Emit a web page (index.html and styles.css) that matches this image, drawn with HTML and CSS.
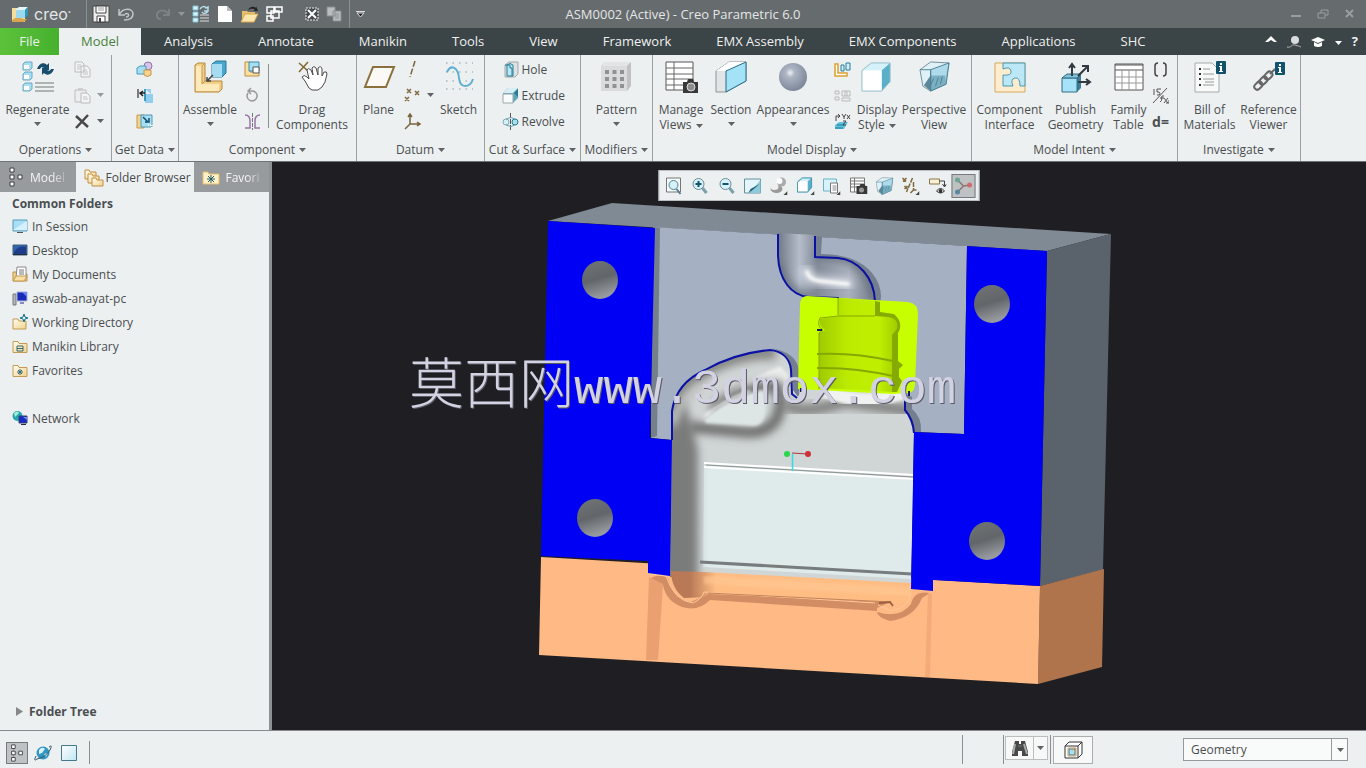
FILE: index.html
```html
<!DOCTYPE html>
<html lang="en">
<head>
<meta charset="utf-8">
<title>ASM0002 (Active) - Creo Parametric 6.0</title>
<link rel="stylesheet" href="styles.css">
</head>
<body>
<svg class="defs" aria-hidden="true">
  <defs>
    <linearGradient id="cubeFront" x1="0" y1="0" x2="1" y2="1"><stop offset="0" stop-color="#fff"/><stop offset="1" stop-color="#bfe6f3"/></linearGradient>
    <linearGradient id="folderFill" x1="0" y1="0" x2="1" y2="1"><stop offset="0" stop-color="#fffdf0"/><stop offset="1" stop-color="#f1d289"/></linearGradient>
    <radialGradient id="ball" cx=".4" cy=".35" r=".65"><stop offset="0" stop-color="#eef1f6"/><stop offset=".25" stop-color="#adb5c4"/><stop offset="1" stop-color="#7d889a"/></radialGradient>
    <symbol id="down" viewBox="0 0 7 4"><path d="M0 0h7L3.500 4z" fill="currentColor"/></symbol>
    <symbol id="folder" viewBox="0 0 16 16"><path d="M1 3.500h5l1 2h8v9H1z" fill="url(#folderFill)" stroke="#c49b55"/></symbol>
    <symbol id="cube" viewBox="0 0 32 32"><path d="M1 9L11 1h20L22 9z" fill="#d5f1f9"/><path d="M22 9L31 1v20l-9 10z" fill="#5bb0c9"/><path d="M1 9h21v22H1z" fill="#fff"/><path d="M1 9L11 1h20v20l-9 10H1z" fill="none" stroke="#8dbccb"/></symbol>
    <symbol id="views" viewBox="0 0 34 34"><path d="M2 2h27v28H2z" fill="#fff" stroke="#565656"/><path d="M2 8h27M2 14h27M2 19h27M2 25h27M10 2v28" fill="none" stroke="#666"/><path d="M19 22h4l1-3h5l1 3h4v11H19z" fill="#383838"/><circle cx="27" cy="27" r="4" fill="#8d8d8d" stroke="#ddd"/></symbol>
    <symbol id="persp" viewBox="0 0 32 32"><path d="M1 9L12 1l19 1-4 22-15 7-8-5z" fill="#dff1f7" stroke="#71909c"/><path d="M12 31L5 25 12 15h15l1 9z" fill="#5d8799"/><path d="M12 9L31 2 28 24 12 31z" fill="#8fcbe0" fill-opacity=".6" stroke="#4b8298"/><path d="M1 9h11v22M15 18l-4 9M20 17l-3 9M24 16l-2 8" fill="none" stroke="#4b8298"/></symbol>
    <symbol id="tree" viewBox="0 0 16 20"><path d="M4 5v10M5 10h6" stroke="#999"/><path d="M2 1h4v4H2zM2 8h4v4H2zM2 15h4v4H2zM10 8h4v4h-4z" fill="#fff" stroke="#3c4043"/></symbol>
    <symbol id="info" viewBox="0 0 10 13"><rect width="10" height="13" rx="1" fill="#12526c"/><path d="M4 2h2v2H4zM3 5h3v5h1v1H3v-1h1V6H3z" fill="#fff"/></symbol>
  </defs>
</svg>

<header class="titlebar">
  <div class="brand">
    <svg width="19" height="18" viewBox="0 0 19 18"><path d="M1 3h5v9h8v5H1z" fill="#f7dc9b"/><path d="M1 17h12l3-3h-3l-7-2-5 3z" fill="#d9a64e"/><path d="M5 4l3-2h9l-3 3v8H5z" fill="#e5f6fb"/><path d="M14 5l3-3v8l-3 3z" fill="#2f98bd"/><path d="M5 5h9v8H5z" fill="#9bd9ee"/></svg>
    <span>creo<sup>•</sup></span>
  </div>
  <div class="quick">
    <button aria-label="Save"><svg width="18" height="18" viewBox="0 0 18 18"><path d="M1 1h16v16H1z" fill="#eee" stroke="#444"/><path d="M4 1h10v7H4zM5 11h8v6H5z" fill="#fff" stroke="#444"/><path d="M6 3h6M6 5h6" stroke="#999"/><path d="M7 13h2v4H7z" fill="#444"/></svg></button>
    <button aria-label="Undo"><svg width="18" height="16" viewBox="0 0 18 16"><path d="M2 3v6h6M2 9C6 1 16 2 16 8c0 4-4 6-9 6M8 8c4-2 5 3 1 3" fill="none" stroke="#c2c6c8" stroke-width="1.500"/></svg></button>
    <button class="redo" aria-label="Redo"><svg width="18" height="16" viewBox="0 0 18 16"><path d="M15 3v6H9M15 9C11 2 2 4 3 10c0 2 2 3 4 3" fill="none" stroke="#7d8285" stroke-width="2"/></svg><svg class="arrow"><use href="#down"/></svg></button>
    <button aria-label="Regenerate model"><svg width="18" height="18" viewBox="0 0 18 18"><path d="M1 1h5v4H1zM1 7h5v4H1zM1 13h5v4H1z" fill="#d9f2fa" stroke="#82c4da"/><path d="M8 10h9M8 13h9M8 16h9" stroke="#ddd"/><path d="M8 4c2-3 5-3 6-1l2-1v4h-4M16 6c-2 3-5 3-6 1" fill="none" stroke="#b8dfed" stroke-width="1.500"/></svg></button>
    <button aria-label="New"><svg width="16" height="18" viewBox="0 0 16 18"><path d="M1 1h9l5 5v11H1z" fill="#fff"/><path d="M10 1v5h5z" fill="#b6bbbd"/></svg></button>
    <button aria-label="Open"><svg width="19" height="18" viewBox="0 0 19 18"><path d="M2 6h5l1 1h7v9H2z" fill="#e7bf6a"/><path d="M1 17l4-8h13l-4 8z" fill="#fbe6ad" stroke="#d5a952"/><path d="M8 5c2-4 6-4 8-2V1l2 5h-5l2-1c-2-2-4-1-7 0z" fill="#242424"/></svg></button>
    <button aria-label="Windows"><svg width="17" height="18" viewBox="0 0 17 18"><path d="M1 2h7v6H1zM9 2h7v5H9zM1 11h6v5H1zM5 6h8v7H5z" fill="#666b6e" stroke="#fff" stroke-width="1.500"/></svg></button>
    <button class="far" aria-label="Close window"><svg width="14" height="14" viewBox="0 0 14 14"><path d="M1 1h12v12H1z" fill="#454a4d" stroke="#eee" stroke-dasharray="2 1"/><path d="M3 3l8 8M11 3l-8 8" stroke="#fff" stroke-width="2"/></svg></button>
    <button aria-label="Copy"><svg width="16" height="16" viewBox="0 0 16 16"><path d="M1 1h8v9H1zM7 5h8v10H7z" fill="#b9bdbf" stroke="#888d90"/><path d="M9 8h4M9 10h4M9 12h4" stroke="#8b9093"/></svg></button>
    <button class="more" aria-label="Customize toolbar"><svg width="9" height="7" viewBox="0 0 9 7"><path d="M0 .500h9" stroke="#ddd"/><path d="M1 2h7L4.500 6z" fill="#222" stroke="#ddd"/></svg></button>
  </div>
  <h1>ASM0002 (Active) - Creo Parametric 6.0</h1>
  <div class="window-buttons">
    <button aria-label="Minimize"><svg width="12" height="12" viewBox="0 0 12 12"><path d="M1 8h10" stroke="#9a9ea0" stroke-width="2"/></svg></button>
    <button aria-label="Restore"><svg width="12" height="12" viewBox="0 0 12 12"><path d="M4 5V2h7v5H8M1 5h7v5H1z" fill="none" stroke="#9a9ea0"/></svg></button>
    <button aria-label="Close"><svg width="12" height="12" viewBox="0 0 12 12"><path d="M2 2l7 7M9 2l-7 7" stroke="#9a9ea0" stroke-width="2"/></svg></button>
  </div>
</header>

<nav class="tabs">
  <button class="file">File</button>
  <button class="current">Model</button>
  <button>Analysis</button><button>Annotate</button><button>Manikin</button><button>Tools</button><button>View</button><button>Framework</button><button>EMX Assembly</button><button>EMX Components</button><button>Applications</button><button>SHC</button>
  <div class="help">
    <button aria-label="Minimize ribbon"><svg width="12" height="14" viewBox="0 0 12 14"><path d="M0 7l6-6 6 6H9L6 5 3 7z" fill="#fff"/></svg></button>
    <button aria-label="Search"><svg width="14" height="14" viewBox="0 0 14 14"><circle cx="8" cy="5" r="4" fill="#d9dcdd"/><path d="M0 12c5 1 4-3 8-2 3 1 4 1 6 2" fill="none" stroke="#b3b8ba"/></svg></button>
    <button aria-label="Learning"><svg width="14" height="14" viewBox="0 0 14 14"><path d="M0 5l7-3 7 3-7 3z" fill="#fff"/><path d="M3 7v4q4 2 8 0V7L7 9z" fill="#fff"/></svg></button>
    <button aria-label="Help menu"><svg class="arrow"><use href="#down"/></svg></button>
    <button class="question">?</button>
  </div>
</nav>

<section class="ribbon" aria-label="Ribbon">
  <div class="group g-operations">
    <div class="row">
      <button class="tool"><svg width="34" height="34" viewBox="0 0 34 34"><g fill="#a7dff2" stroke="#6aa9c0"><path d="M2 4l2-2h7v6l-2 2H2zM2 14l2-2h7v6l-2 2H2zM2 25l2-2h7v6l-2 2H2z"/></g><path d="M3 5h5v4H3zM3 15h5v4H3zM3 26h5v4H3z" fill="#fff"/><path d="M14 23h19M14 27h19M14 31h19" stroke="#9c9fa0" stroke-width="1.500"/><path d="M16 9c2-6 7-7 10-4l2-2v7h-7l2-2c-2-1-3-1-4 1zM33 9c-2 6-7 7-10 4l-2 2V8h7l-2 2c2 1 3 1 4-1z" fill="#174e6e"/></svg><span>Regenerate</span><svg class="arrow"><use href="#down"/></svg></button>
      <div class="smalls with-menu">
        <button class="faded" aria-label="Copy"><svg width="17" height="17" viewBox="0 0 17 17"><path d="M1 1h7l2 2v8H1zM7 5h6l3 3v8H7z" fill="#f5f6f6" stroke="#9a9d9e"/><path d="M3 4h4M3 6h4M3 8h3M9 9h4M9 11h5M9 13h5" stroke="#aaa"/></svg></button>
        <button class="faded" aria-label="Paste"><svg width="17" height="17" viewBox="0 0 17 17"><path d="M1 3h11v12H1z" fill="#eee" stroke="#9a9d9e"/><path d="M4 1h5v3H4z" fill="#bbb"/><path d="M7 6h6l3 3v7H7z" fill="#f8f8f8" stroke="#999"/><path d="M9 10h4M9 12h5" stroke="#aaa"/></svg><svg class="arrow"><use href="#down"/></svg></button>
        <button aria-label="Delete"><svg width="17" height="17" viewBox="0 0 17 17"><path d="M2 3l12 11M14 2L2 15" stroke="#484848" stroke-width="2.500"/></svg><svg class="arrow"><use href="#down"/></svg></button>
      </div>
    </div>
    <button class="group-label">Operations <svg class="arrow"><use href="#down"/></svg></button>
  </div>

  <div class="group g-data">
    <div class="row">
      <div class="smalls">
        <button aria-label="User-defined feature"><svg width="18" height="17" viewBox="0 0 18 17"><circle cx="12" cy="5" r="4" fill="#d8c4e8" stroke="#8e73a8"/><path d="M1 7l3-2h6v6l-2 2H1z" fill="#a5dff3" stroke="#4c9ab8"/><path d="M8 9h7v5q-4 3-7 0z" fill="#f5d391" stroke="#c6974a"/></svg></button>
        <button aria-label="Copy geometry"><svg width="18" height="17" viewBox="0 0 18 17"><path d="M2 2v9" stroke="#555" stroke-width="1.500"/><path d="M9 2h6v5M9 7h8v9H9z" fill="#92cfee"/><path d="M9 2v12" stroke="#137fa6" stroke-width="1.500"/><path d="M4 6h5M7 4l-3 2 3 3" fill="none" stroke="#222" stroke-width="1.500"/></svg></button>
        <button aria-label="Shrinkwrap"><svg width="18" height="17" viewBox="0 0 18 17"><path d="M1 2h7v13H1z" fill="#f5d391" stroke="#c6974a"/><path d="M5 2h11v12H5z" fill="#a5dff3" stroke="#5799b3"/><path d="M7 4l5 5M13 5v4H9" fill="none" stroke="#174e6e" stroke-width="1.500"/><path d="M12 12h4v4" fill="none" stroke="#f2f5f6" stroke-dasharray="1 1" stroke-width="2"/></svg></button>
      </div>
    </div>
    <button class="group-label">Get Data <svg class="arrow"><use href="#down"/></svg></button>
  </div>

  <div class="group g-component">
    <div class="row">
      <button class="tool"><svg width="34" height="34" viewBox="0 0 34 34"><path d="M2 5l3-2h7v18h17v8l-3 3H2z" fill="#f3cf88" stroke="#b5883b"/><path d="M3 6h6v18h17v7H3z" fill="#fde9b9"/><path d="M9 24V6l3-3M9 24l3-3" fill="none" stroke="#c29a50"/><path d="M19 4l4-3h10v12l-4 4H19z" fill="#48a7cd" stroke="#2a7896"/><path d="M19 4h10v13H19z" fill="#a6dcf2"/><path d="M20 15l-6 6m0-4v4h4" fill="none" stroke="#444" stroke-width="1.500"/></svg><span>Assemble</span><svg class="arrow"><use href="#down"/></svg></button>
      <div class="smalls">
        <button aria-label="Create"><svg width="17" height="17" viewBox="0 0 17 17"><path d="M1 1h5v10h9v4H1z" fill="#fbe0a1" stroke="#bd8f42"/><path d="M5 1h10v9H5z" fill="#a5dff3" stroke="#3b8ba8"/><path d="M9 6h6v6H9z" fill="#fff" stroke="#555"/></svg></button>
        <button aria-label="Repeat"><svg width="17" height="17" viewBox="0 0 17 17"><path d="M4 6a5 5 0 1 0 5-2H4M7 1L4 4l3 3" fill="none" stroke="#999" stroke-width="1.500"/></svg></button>
        <button aria-label="Mirror component"><svg width="17" height="17" viewBox="0 0 17 17"><path d="M1 2q5 0 5 6v7H1M16 2q-5 0-5 6v7h5" fill="none" stroke="#9974a4" stroke-width="1.500"/><path d="M8.500 0v17" stroke="#777" stroke-dasharray="4 1"/></svg></button>
      </div>
      <i class="rule"></i>
      <button class="tool drag"><svg width="34" height="34" viewBox="0 0 34 34"><path d="M4 3l9 8M13 2L4 12" stroke="#806631" stroke-width="1.500"/><path d="M14 28l-4-7-3-4q2-3 5 0l2 2-2-9q1-3 4 0l2 5-1-7q2-3 4 0l2 7V8q3-3 4 1v7l2-4q3-1 3 2l-2 8-3 5-4 3H17z" fill="#fff" stroke="#4b4b4b"/></svg><span>Drag<br>Components</span></button>
    </div>
    <button class="group-label">Component <svg class="arrow"><use href="#down"/></svg></button>
  </div>

  <div class="group g-datum">
    <div class="row">
      <button class="tool"><svg width="34" height="34" viewBox="0 0 34 34"><path d="M11 7h21L24 27H3z" fill="#faf9f5" stroke="#89703c" stroke-width="2"/></svg><span>Plane</span></button>
      <div class="smalls with-menu">
        <button aria-label="Axis"><svg width="17" height="18" viewBox="0 0 17 18"><path d="M11 1L6 17" stroke="#7a633b" stroke-width="1.500" stroke-dasharray="6 2"/></svg></button>
        <button aria-label="Point"><svg width="17" height="17" viewBox="0 0 17 17"><path d="M3 2l4 4M7 2L3 6M11 4l4 4M15 4l-4 4M1 10l4 4M5 10l-4 4" stroke="#806840" stroke-width="1.500"/></svg><svg class="arrow"><use href="#down"/></svg></button>
        <button aria-label="Coordinate system"><svg width="17" height="17" viewBox="0 0 17 17"><path d="M6 1v10h10M6 11l-5 5M4 4l2-3 2 3M13 9l3 2-3 2" fill="none" stroke="#79633c" stroke-width="1.500"/></svg></button>
      </div>
      <button class="tool"><svg width="34" height="34" viewBox="0 0 34 34"><path d="M4 3h27M4 12h27M4 21h27M4 29h27" stroke="#7f9da9" stroke-width="1" stroke-dasharray="1.500 5"/><path d="M5 12c4-8 11-5 12 6s11 10 14 1" fill="none" stroke="#60afd0" stroke-width="2"/></svg><span>Sketch</span></button>
    </div>
    <button class="group-label">Datum <svg class="arrow"><use href="#down"/></svg></button>
  </div>

  <div class="group g-cut">
    <div class="row">
      <div class="smalls texts">
        <button><svg width="17" height="17" viewBox="0 0 17 17"><path d="M3 4l4-3h9v12l-3 3H3z" fill="#dce1e2" stroke="#a2a8aa"/><path d="M5 4q3-3 6 0v11H5z" fill="#b7e8f5" stroke="#277b94"/><path d="M3 4h5v3h2v8" fill="none" stroke="#277b94"/></svg>Hole</button>
        <button><svg width="17" height="17" viewBox="0 0 17 17"><path d="M1 6l5-5h10v10l-5 5H1z" fill="#5ca7b9"/><path d="M1 7h10v9H1z" fill="#f9fafa" stroke="#9ba7ab"/><path d="M1 6l5-5h10l-5 5z" fill="#d8eef3"/><path d="M12 6l4-4v8z" fill="#267b90"/></svg>Extrude</button>
        <button><svg width="17" height="17" viewBox="0 0 17 17"><circle cx="4" cy="9" r="3" fill="#d6eef4" stroke="#7faeba"/><circle cx="13" cy="9" r="3" fill="#acddea" stroke="#277b94"/><path d="M8.500 0v17" stroke="#555" stroke-dasharray="5 1"/><path d="M4 6q5-3 9 0M4 12q5 3 9 0" fill="none" stroke="#6aa6b7"/></svg>Revolve</button>
      </div>
    </div>
    <button class="group-label">Cut &amp; Surface <svg class="arrow"><use href="#down"/></svg></button>
  </div>

  <div class="group g-modifiers">
    <div class="row">
      <button class="tool"><svg width="34" height="34" viewBox="0 0 34 34"><path d="M2 6l4-4h26v24l-4 5H2z" fill="#bfc1c2"/><path d="M2 6l4-4h26l-4 4z" fill="#e3e4e5"/><path d="M2 6h26v25H2z" fill="#d9dbdc"/><path d="M6 12h19M6 19h19M6 26h19" stroke="#8f9293" stroke-width="4" stroke-dasharray="4 3.500"/></svg><span>Pattern</span><svg class="arrow"><use href="#down"/></svg></button>
    </div>
    <button class="group-label">Modifiers <svg class="arrow"><use href="#down"/></svg></button>
  </div>

  <div class="group g-display">
    <div class="row">
      <button class="tool"><svg width="34" height="34"><use href="#views"/></svg><span>Manage<br>Views <svg class="arrow"><use href="#down"/></svg></span></button>
      <button class="tool"><svg width="34" height="34" viewBox="0 0 34 34"><path d="M2 11L15 2h17v19L12 32H2z" fill="#e1e5e6" stroke="#8e9496"/><path d="M2 11h10l20-9H15z" fill="#fff"/><path d="M12 11l20-9v19L12 32z" fill="#a4e2f7" stroke="#286a86"/></svg><span>Section</span><svg class="arrow"><use href="#down"/></svg></button>
      <button class="tool"><svg width="34" height="34" viewBox="0 0 34 34"><circle cx="17" cy="17" r="14" fill="url(#ball)"/></svg><span>Appearances</span><svg class="arrow"><use href="#down"/></svg></button>
      <div class="smalls">
        <button aria-label="Appearance states"><svg width="17" height="17" viewBox="0 0 17 17"><path d="M1 3h3v9h9v3H1z" fill="#fff" stroke="#e0a02e" stroke-width="1.500"/><path d="M7 4h3v6H7zM12 2h4v7h-4z" fill="#d4effa" stroke="#287f9f"/></svg></button>
        <button class="faded" aria-label="Component interface display"><svg width="17" height="17" viewBox="0 0 17 17"><path d="M1 4h4v3H1zM1 10h4v3H1zM8 4h8v5H8zM8 11h8v3H8zM11 4v5M13 4v5" fill="#eee" stroke="#999"/></svg></button>
        <button aria-label="Annotation planes"><svg width="17" height="17" viewBox="0 0 17 17"><path d="M1 12l4-3h9l-4 7H1z" fill="#62c2df"/><path d="M3 12h7M1 15h8" stroke="#187897" stroke-width="1"/><path d="M2 8V3h4M4 1l2 2-2 2M8 1l2 3 2-3M10 4v2M13 2l3 4M16 2l-3 4M9 8h3l-3 4h3" fill="none" stroke="#444"/></svg></button>
      </div>
      <button class="tool"><svg width="34" height="34" viewBox="0 0 34 34"><use href="#cube" x="1" y="2" width="30" height="30"/></svg><span>Display<br>Style <svg class="arrow"><use href="#down"/></svg></span></button>
      <button class="tool"><svg width="34" height="34" viewBox="0 0 34 34"><use href="#persp" x="2" y="1" width="31" height="31"/></svg><span>Perspective<br>View</span></button>
    </div>
    <button class="group-label">Model Display <svg class="arrow"><use href="#down"/></svg></button>
  </div>

  <div class="group g-intent">
    <div class="row">
      <button class="tool"><svg width="34" height="34" viewBox="0 0 34 34"><path d="M2 3h30v29H2z" fill="#fdeccd" stroke="#d7a75d"/><path d="M10 3v6q7-3 8 2t-8 4v11h10q-3-7 2-8t5 8h5V3z" fill="#bbe7f7" stroke="#4d98b1"/></svg><span>Component<br>Interface</span></button>
      <button class="tool"><svg width="34" height="34" viewBox="0 0 34 34"><path d="M3 18l5-4h14v14l-4 4H3z" fill="#3d7b96"/><path d="M3 18h15v14H3z" fill="#a6e3f8" stroke="#356d83"/><path d="M3 18l5-4h14l-4 4z" fill="#7fc1d9" stroke="#356d83"/><path d="M13 16V5M10 8l3-4 3 4M19 16L28 7M23 6h6v6M19 22h11M27 19l4 3-4 3" fill="none" stroke="#303a40" stroke-width="2"/></svg><span>Publish<br>Geometry</span></button>
      <button class="tool"><svg width="34" height="34" viewBox="0 0 34 34"><path d="M3 4h28v26H3z" fill="#fff" stroke="#555"/><path d="M3 10h28M3 5h28" stroke="#555"/><path d="M3 17h28M3 23h28M10 10v20M17 10v20M24 10v20" stroke="#999"/></svg><span>Family<br>Table</span></button>
      <div class="smalls">
        <button aria-label="Parameters"><svg width="17" height="17" viewBox="0 0 17 17"><path d="M6 2Q3 2 3 5v7q0 3 3 3M11 2q3 0 3 3v7q0 3-3 3" fill="none" stroke="#444" stroke-width="1.500"/></svg></button>
        <button aria-label="Switch dimensions"><svg width="17" height="17" viewBox="0 0 17 17"><path d="M1 16L15 1M2 2v6M5 2h4M5 2v3h2q2 2 0 3H5M8 15q2 0 2-6h2M8 11h4M12 11l4 5M16 11l-4 5M14 16h3v-3" fill="none" stroke="#555"/></svg></button>
        <button class="relation" aria-label="Relations">d=</button>
      </div>
    </div>
    <button class="group-label">Model Intent <svg class="arrow"><use href="#down"/></svg></button>
  </div>

  <div class="group g-investigate">
    <div class="row">
      <button class="tool"><svg width="34" height="34" viewBox="0 0 34 34"><path d="M2 3h17l7 7v22H2z" fill="#f8f9f9" stroke="#a5aaac"/><path d="M6 9h2M6 14h2M6 19h2M6 25h2" stroke="#333" stroke-width="2"/><path d="M10 9h7M10 14h11M10 19h11M10 25h11M12 22h9" stroke="#96999a"/><use href="#info" x="23" y="1" width="10" height="13"/></svg><span>Bill of<br>Materials</span></button>
      <button class="tool"><svg width="34" height="34" viewBox="0 0 34 34"><g fill="none" stroke="#666" stroke-width="2"><rect x="2" y="23" width="9" height="6" rx="3" transform="rotate(-45 6 26)"/><rect x="7" y="18" width="9" height="6" rx="3" transform="rotate(-45 11 21)"/><rect x="12" y="13" width="9" height="6" rx="3" transform="rotate(-45 16 16)"/><path d="M18 14l5-5"/></g><use href="#info" x="23" y="2" width="10" height="13"/></svg><span>Reference<br>Viewer</span></button>
    </div>
    <button class="group-label">Investigate <svg class="arrow"><use href="#down"/></svg></button>
  </div>
</section>

<main class="workspace">
  <aside class="navigator">
    <div class="nav-tabs">
      <button><svg width="16" height="20"><use href="#tree"/></svg><span class="fade">Model</span></button>
      <button class="current"><svg width="20" height="19" viewBox="0 0 20 19"><g fill="url(#folderFill)" stroke="#c18e43"><path d="M1 2h4l1 2h6v7H1z"/><path d="M4 6h4l1 2h6v7H4z"/><path d="M8 10h4l1 2h6v6H8z"/></g></svg>Folder Browser</button>
      <button><svg width="18" height="18" viewBox="0 0 18 18"><path d="M1 4h5l1 2h10v10H1z" fill="#fff1c7" stroke="#e3bd6e"/><path d="M9 7v8M5 11h8M6 8l6 6M12 8l-6 6" stroke="#225b67"/></svg><span class="fade">Favori</span></button>
    </div>
    <h2>Common Folders</h2>
    <ul class="folders">
      <li><a href="#"><svg width="16" height="16" viewBox="0 0 16 16"><path d="M1 2h14v11H1z" fill="#a8dff6" stroke="#5799b7"/><path d="M1 12L15 3v9z" fill="#d5f2fc"/><path d="M5 14h6v1H5z" fill="#555"/></svg>In Session</a></li>
      <li><a href="#"><svg width="16" height="16" viewBox="0 0 16 16"><path d="M1 3h14v10H1z" fill="#2e66ad" stroke="#435c79"/><path d="M2 10q5-7 12-5v7H2z" fill="#1c3d88"/><path d="M1 12.500h14" stroke="#23303c"/></svg>Desktop</a></li>
      <li><a href="#"><svg width="16" height="16" viewBox="0 0 16 16"><path d="M1 6h3l1 2h10v7H1z" fill="#f4d28d" stroke="#bb9148"/><path d="M5 1h9v11H4z" fill="#fff" stroke="#888"/><path d="M7 4h5M7 6h5M7 8h5" stroke="#777"/><path d="M1 15l3-5h11l-3 5z" fill="#f8e0a7" stroke="#c2984f"/></svg>My Documents</a></li>
      <li><a href="#"><svg width="16" height="16" viewBox="0 0 16 16"><path d="M1 4h3v11H1z" fill="#b5babd" stroke="#777"/><path d="M5 2h10v9H5z" fill="#172bb6" stroke="#aab2d9"/><path d="M10 2h5v5z" fill="#7083ed"/><path d="M8 12h4v2H8z" fill="#888ac0"/></svg>aswab-anayat-pc</a></li>
      <li><a href="#"><svg width="16" height="16" viewBox="0 0 16 16"><path d="M1 5h5l1 2h7v8H1z" fill="url(#folderFill)" stroke="#c49b55"/><path d="M12 0l1 3 3 1-3 1-1 3-1-3-3-1 3-1z" fill="#d5f1f9" stroke="#17718d"/></svg>Working Directory</a></li>
      <li><a href="#"><svg width="16" height="16" viewBox="0 0 16 16"><use href="#folder"/><path d="M5 8h6v5H5zM5 10.500h6" fill="none" stroke="#346b76"/></svg>Manikin Library</a></li>
      <li><a href="#"><svg width="16" height="16" viewBox="0 0 16 16"><use href="#folder"/><path d="M8 7v6M5 10h6M6 8l4 4M10 8l-4 4" stroke="#346b76"/></svg>Favorites</a></li>
      <li class="network"><a href="#"><svg width="16" height="16" viewBox="0 0 16 16"><circle cx="5.500" cy="6" r="5" fill="#29a6b1"/><path d="M2 3q4-3 5 0L5 5 3 7z" fill="#9ef0d0"/><path d="M7 6h8v7H7z" fill="#152cc4" stroke="#34436e"/><path d="M11 7h4v3z" fill="#708af5"/><path d="M9 14h5v1H9z" fill="#22264b"/></svg>Network</a></li>
    </ul>
    <button class="folder-tree"><svg width="7" height="9" viewBox="0 0 7 9"><path d="M0 0l7 4.500L0 9z" fill="#858989"/></svg>Folder Tree</button>
  </aside>

  <section class="viewport" aria-label="Graphics area">
    <svg class="scene" viewBox="272 162 1094 568" role="img" aria-label="Bottle mold assembly">
      <defs>
        <filter id="soft" x="-30%" y="-30%" width="160%" height="160%"><feGaussianBlur stdDeviation="4"/></filter>
        <filter id="fine" x="-30%" y="-30%" width="160%" height="160%"><feGaussianBlur stdDeviation="1.500"/></filter>
        <linearGradient id="hole" x1="0" y1="0" x2=".3" y2="1"><stop offset="0" stop-color="#707476"/><stop offset=".55" stop-color="#62666a"/><stop offset="1" stop-color="#96999d"/></linearGradient>
        <linearGradient id="pipe" gradientUnits="userSpaceOnUse" x1="778" y1="0" x2="876" y2="0"><stop offset="0" stop-color="#707987"/><stop offset=".22" stop-color="#b5bdcb"/><stop offset=".4" stop-color="#828b99"/><stop offset=".72" stop-color="#aab1be"/><stop offset="1" stop-color="#727b88"/></linearGradient>
        <linearGradient id="yellowBody"><stop offset="0" stop-color="#9fca00"/><stop offset=".35" stop-color="#bceb00"/><stop offset=".75" stop-color="#c0f000"/><stop offset="1" stop-color="#9dc900"/></linearGradient>
        <linearGradient id="base" gradientUnits="userSpaceOnUse" x1="676" y1="0" x2="716" y2="0"><stop offset="0" stop-color="#bb7956"/><stop offset=".35" stop-color="#b97956"/><stop offset="1" stop-color="#ffbd83"/></linearGradient>
        <clipPath id="bottle"><path d="M670 577L672 412C675 392 686 378 704 370Q735 353 770 350C782 351 790 358 791 368L793 390 798 397 802 387 906 393V410L914 432 911 590z"/></clipPath>
        <clipPath id="pipeClip"><path d="M778 233V256C779 280 792 296 808 297L840 300 875 302C874 276 858 260 838 258L815 257V235z"/></clipPath>
      </defs>
      <path d="M548 221L612 203 1111 234 1047 251z" fill="#808a94"/>
      <path d="M1047 251L1111 234 1103 570 1040 586z" fill="#5a636c"/>
      <path d="M1040 586L1104 569 1102 667 1038 684z" fill="#b0744d"/>
      <path d="M653 227L967 246 964 434 914 432 672 440 651 438z" fill="#a5b0c2"/>
      <path d="M653 227L660 228 657 436 651 438z" fill="#757e8b"/>
      <path d="M541 557L1040 586 1038 684 539 655z" fill="#ffb984"/>
      <path d="M815 236L822 237 821 254Q856 254 872 273 884 288 880 304L873 302Q870 260 815 257z" fill="#747e8e"/>
      <g clip-path="url(#pipeClip)">
        <path d="M770 230H880V304H770z" fill="url(#pipe)"/>
        <path d="M778 263Q782 295 815 298M816 254L845 258Q872 268 874 298" fill="none" stroke="#69727e" stroke-width="8" filter="url(#soft)"/>
        <path d="M806 270Q808 280 820 281L849 284" fill="none" stroke="#f2f4f8" stroke-width="7" stroke-linecap="round" filter="url(#soft)"/>
        <path d="M807 272Q809 280 820 281L848 284" fill="none" stroke="#fff" stroke-width="3" stroke-linecap="round" filter="url(#fine)"/>
      </g>
      <path d="M778 234V256C779 280 791 295 808 297L839 298M815 236V257L838 258C858 260 874 277 875 301" fill="none" stroke="#0b12a3" stroke-width="2"/>
      <path d="M770 348Q797 352 799 371V397L791 392V368Q790 352 770 348z" fill="#747e8e"/>
      <path d="M906 394L912 397V409Q922 417 921 432L914 433Q910 416 905 410z" fill="#747e8e"/>
      <g clip-path="url(#bottle)">
        <path d="M660 340H930V600H660z" fill="#d0d5d5"/>
        <path d="M704 465L914 478 911 579 703 567z" fill="#dfeaea"/>
        <path d="M698 425Q714 394 780 366L788 374V394L760 388 712 410z" fill="#e9ecea" filter="url(#fine)"/>
        <path d="M640 375L684 400 692 425 698 450V630H640z" fill="#7a7c7c" filter="url(#soft)"/>
        <path d="M664 440Q668 394 704 371 740 351 776 353" fill="none" stroke="#858784" stroke-width="14" filter="url(#soft)"/>
        <path d="M672 425Q680 398 702 386" fill="none" stroke="#c4c7c5" stroke-width="8" filter="url(#soft)"/>
        <path d="M712 412Q735 388 777 386 785 400 776 420 766 434 745 432L690 427" fill="none" stroke="#6a6c6a" stroke-width="11" filter="url(#soft)"/>
        <path d="M785 404Q800 416 845 402L914 411" fill="none" stroke="#7b7e7b" stroke-width="11" filter="url(#soft)"/>
        <path d="M826 391Q868 410 912 389" fill="none" stroke="#eff2f1" stroke-width="13" filter="url(#fine)"/>
        <path d="M704 420Q720 404 745 395L762 390Q768 392 765 414 763 426 754 426L706 423z" fill="#dee6e5" filter="url(#fine)"/>
        <path d="M706 415Q724 400 750 391" fill="none" stroke="#f4f6f5" stroke-width="2" filter="url(#fine)"/>
        <path d="M704 463L914 475M704 467L914 479" stroke="#fff" stroke-width="2"/>
        <path d="M706 465L914 477" stroke="#8d9292"/>
        <path d="M700 562L912 574" stroke="#777c7c" stroke-width="3"/>
      </g>
      <path d="M672 440V411C675 391 687 378 705 370Q735 353 770 350C782 351 790 358 791 370L792 394 797 398M905 394V410Q913 419 914 433" fill="none" stroke="#0b12a3" stroke-width="2"/>
      <path d="M671 571L704 572 911 583V603L885 603 710 597 684 598Q671 588 671 571z" fill="url(#base)"/>
      <path d="M704 580L911 592" stroke="#ffc995" stroke-width="8" opacity=".6" filter="url(#fine)"/>
      <path d="M650 579Q657 573 668 578 673 599 691 602L709 594 839 600 890 602 877 608V612Q900 619 911 604 914 590 930 593L922 598Q914 618 890 621 876 617 877 611L710 600Q698 612 682 607 666 601 663 585L651 584z" fill="#d38d64"/>
      <path d="M649 577L663 584 658 660H646z" fill="#eaa071"/>
      <path d="M928 593L932 594 930 677H925z" fill="#f4aa79"/>
      <path d="M666 576Q674 601 693 603 702 599 704 592L875 603M668 576L650 574M911 593Q909 608 891 611L878 605" fill="none" stroke="#ffc999"/>
      <path d="M708 593L891 602" fill="none" stroke="#c4825b"/>
      <path d="M879 603L890 602 893 606" fill="none" stroke="#9e6143" stroke-width="2"/>
      <path d="M548 221L655 228 650 438 672 440 670 576 648 573 648 561 541 556z" fill="#0000f4"/>
      <path d="M967 246L1047 251 1040 586 933 580 933 591 911 589 914 432 964 434z" fill="#0000f4"/>
      <g fill="url(#hole)"><ellipse cx="600" cy="280" rx="18" ry="19"/><ellipse cx="992" cy="304" rx="18" ry="19"/><ellipse cx="595" cy="518" rx="18" ry="19"/><ellipse cx="987" cy="541" rx="18" ry="19"/></g>
      <path d="M807 296L908 302Q918 303 918 314L915 385Q914 394 906 393L893 394 798 389 800 304Q801 296 807 296z" fill="#c8ff00"/>
      <path d="M838 298L875 301V315L890 316Q900 319 899 329L895 334 894 392 819 388V333L825 330Q818 326 820 319L838 316z" fill="url(#yellowBody)"/>
      <path d="M875 301L880 302V312L894 314Q904 323 898 333V361L903 365 899 369V377L902 381 897 392H892V335L897 329Q899 318 888 317L875 316z" fill="#86ab00"/>
      <path d="M838 316L820 318Q816 326 823 330L819 333V389M838 316L875 316M838 298V315" fill="none" stroke="#85a900"/>
      <path d="M817 354Q853 352 893 361M817 368Q853 367 893 376" fill="none" stroke="#85a900" stroke-width="2"/>
      <path d="M817 330h5M909 391v5M801 392v-4" stroke="#151d61" stroke-width="2"/>
      <path d="M792 453L808 454" stroke="#ad353a"/><path d="M792.500 454V471" stroke="#32dce0" stroke-width="1.500"/>
      <circle cx="787" cy="454" r="3" fill="#29d64b"/><circle cx="808" cy="454" r="3" fill="#cf3038"/>
      <text class="watermark" x="409" y="403"><tspan class="han">莫西网</tspan><tspan>www.3dmox.com</tspan></text>
    </svg>

    <div class="view-tools" role="toolbar" aria-label="View">
      <button aria-label="Refit"><svg width="18" height="18" viewBox="0 0 18 18"><path d="M2 1h14v14H2z" fill="#f3fbfd" stroke="#777"/><circle cx="9" cy="8" r="4.500" fill="#d7f1f8" stroke="#56818e"/><path d="M12 12l4 5" stroke="#557a87" stroke-width="2"/></svg></button>
      <button aria-label="Zoom in"><svg width="18" height="18" viewBox="0 0 18 18"><circle cx="8" cy="7" r="5.500" fill="#d7f1f8" stroke="#6b8c96"/><path d="M5 7h6M8 4v6" stroke="#14526e" stroke-width="2"/><path d="M12 11l4 5" stroke="#7b9fac" stroke-width="3"/></svg></button>
      <button aria-label="Zoom out"><svg width="18" height="18" viewBox="0 0 18 18"><circle cx="8" cy="7" r="5.500" fill="#d7f1f8" stroke="#6b8c96"/><path d="M5 7h6" stroke="#14526e" stroke-width="2"/><path d="M12 11l4 5" stroke="#7b9fac" stroke-width="3"/></svg></button>
      <button aria-label="Repaint"><svg width="18" height="18" viewBox="0 0 18 18"><path d="M1 2h16v14H1z" fill="#e4f6fb" stroke="#64909c"/><path d="M17 3v13H6z" fill="#8fcada"/><path d="M16 7l-8 7-3 2 2-4z" fill="#24657e"/></svg></button>
      <button aria-label="Rendering options"><svg width="18" height="18" viewBox="0 0 18 18"><ellipse cx="7" cy="12" rx="6" ry="4" fill="#999"/><circle cx="12" cy="5" r="4.500" fill="#aaa"/><ellipse cx="5" cy="10" rx="4" ry="3" fill="#eee"/><circle cx="10" cy="4" r="3" fill="#fff"/><path d="M18 14v4h-4z" fill="#444"/></svg></button>
      <button aria-label="Display style"><svg width="18" height="18" viewBox="0 0 18 18"><use href="#cube" width="16" height="16"/><path d="M1 5L6 1h9v9l-4 5H1z" fill="none" stroke="#4d9ab3"/><path d="M18 14v4h-4z" fill="#444"/></svg></button>
      <button aria-label="Saved orientations"><svg width="18" height="18" viewBox="0 0 18 18"><path d="M1 2h13v12H1z" fill="#d7f2fa" stroke="#69b3ca"/><path d="M8 6h7v10H8z" fill="#fff" stroke="#777"/><path d="M10 9h4M10 11h4M10 13h4" stroke="#888"/><path d="M18 14v4h-4z" fill="#444"/></svg></button>
      <button aria-label="View manager"><svg width="18" height="18" viewBox="0 0 18 18"><path d="M1 1h14v14H1zM1 4h14M1 7h14M1 10h14M5 1v14" fill="#fff" stroke="#777"/><path d="M7 9h3l1-2h4l1 2h2v8H7z" fill="#383838"/><circle cx="12" cy="13" r="2.500" fill="#999"/></svg></button>
      <button aria-label="Perspective view"><svg width="18" height="18"><use href="#persp"/></svg></button>
      <button aria-label="Datum display filters"><svg width="18" height="18" viewBox="0 0 18 18"><path d="M1 1l4 4M5 1L1 5M11 1L5 15M12 5v8h4M12 13l-3 3M3 9l3 3M6 9l-3 3" fill="none" stroke="#806840" stroke-width="1.500" stroke-dasharray="5 1"/><path d="M18 14v4h-4z" fill="#444"/></svg></button>
      <button aria-label="Annotation display"><svg width="18" height="18" viewBox="0 0 18 18"><path d="M1 2h10v5H1z" fill="#f8efd7" stroke="#8b7747"/><path d="M11 4h5v5M14 7l2 3 2-3" fill="none" stroke="#444"/><path d="M8 14q4-5 8 0-4 4-8 0z" fill="#fff" stroke="#333"/><circle cx="12" cy="14" r="2" fill="#333"/></svg></button>
      <button class="pressed" aria-label="Spin center"><svg width="18" height="18" viewBox="0 0 18 18"><path d="M3 3l6 6 7-1M9 9l-6 6" fill="none" stroke="#8c7474" stroke-width="1.500"/><circle cx="3" cy="3" r="2.500" fill="#6ba690"/><circle cx="3" cy="15" r="2.500" fill="#5787a2"/><circle cx="15" cy="8" r="2.500" fill="#cf6b70"/></svg></button>
    </div>
  </section>
</main>

<footer class="statusbar">
  <div class="left">
    <button class="pressed" aria-label="Navigator"><svg width="16" height="18"><use href="#tree"/></svg></button>
    <button aria-label="Browser"><svg width="18" height="18" viewBox="0 0 18 18"><circle cx="9" cy="9" r="6.500" fill="#3294c1"/><path d="M5 6q3-4 6-1l-3 4-3 1zM10 10l4-1-2 4z" fill="#d5f1fa"/><path d="M3 15Q-1 18 2 12M15 3q4-3 1 3-4 7-13 9" fill="none" stroke="#34586b"/></svg></button>
    <button aria-label="Full screen"><svg width="16" height="16" viewBox="0 0 16 16"><path d="M.500 .500h15v15H.500z" fill="url(#cubeFront)" stroke="#46788b"/></svg></button>
    <i class="rule"></i>
  </div>
  <div class="right">
    <i class="rule"></i>
    <i class="rule second"></i>
    <div class="split">
      <button aria-label="Find"><svg width="18" height="17" viewBox="0 0 18 17"><path d="M4 1h4v3h2V1h4l3 11v4h-6v-5H7v5H1v-4z" fill="#484848"/><path d="M4 4L2 14M13 4l3 10" stroke="#aaa" stroke-width="2"/><path d="M7 6h4" stroke="#777"/></svg></button>
      <button class="open" aria-label="Find options"><svg class="arrow"><use href="#down"/></svg></button>
    </div>
    <i class="rule third"></i>
    <button class="box" aria-label="Selection box"><svg width="19" height="18" viewBox="0 0 19 18"><path d="M1 5l4-4h13v12l-4 4H1zM1 5h13v12M14 5l4-4" fill="#fff" stroke="#333"/><path d="M5 8h6v6H5z" fill="#a8dff2" stroke="#397892"/><path d="M4 7h8v8H4zM8 9l3-2v6" fill="none" stroke="#bc9d67"/></svg></button>
    <div class="filter"><select aria-label="Selection filter"><option>Geometry</option></select><svg class="arrow"><use href="#down"/></svg></div>
  </div>
</footer>
</body>
</html>
```
FILE: styles.css
```css
* { box-sizing: border-box; }
html, body { height: 100%; }
body {
  margin: 0;
  display: flex;
  flex-direction: column;
  overflow: hidden;
  background: #ecf0f1;
  color: #4b4e50;
  font: 12px/15px "Open Sans", "Noto Sans", sans-serif;
}
button {
  margin: 0;
  padding: 0;
  border: 0;
  background: none;
  color: inherit;
  font: inherit;
  white-space: nowrap;
}
svg { display: block; flex: none; }
.defs { position: absolute; width: 0; height: 0; }
.arrow { display: inline-block; width: 7px; height: 4px; vertical-align: middle; }
.rule { width: 1px; background: #8b9193; }

.titlebar {
  position: relative;
  flex: none;
  display: flex;
  justify-content: space-between;
  height: 28px;
  background: #666b6d;
  color: #e4e6e7;
}
.brand { display: flex; align-items: center; gap: 4px; width: 87px; padding-left: 11px; border-right: 1px solid #8a8f91; font: 16px/20px Inter, "Open Sans", sans-serif; }
.brand sup { font-size: 6px; line-height: 6px; vertical-align: 6px; }
.quick { display: flex; align-items: center; gap: 7px; padding-left: 5px; flex: 1; }
.quick .redo { display: flex; align-items: center; gap: 6px; margin: 0 0 0 12px; }
.quick .redo .arrow { color: #92979a; }
.quick .far { margin: 0 0 0 15px; }
.quick .more { height: 28px; padding-left: 6px; border-left: 1px solid #8a8f91; }
.titlebar h1 {
  position: absolute;
  inset: 0;
  margin: 0;
  text-align: center;
  pointer-events: none;
  font-size: 13px;
  font-weight: 400;
  line-height: 28px;
}
.window-buttons { display: flex; align-items: center; gap: 15px; padding-right: 10px; }

.tabs { flex: none; display: flex; gap: 1px; height: 27px; background: #3b4446; color: #eef0f0; font-size: 13px; }
.tabs > button { padding: 0 22px; }
.tabs .file { width: 59px; padding: 0; margin-right: -1px; background: linear-gradient(90deg, #5cc23a, #46b02f); }
.tabs .current { background: #ecf0f1; color: #4a8040; }
.help { display: flex; align-items: center; gap: 10px; margin-left: auto; padding-right: 8px; }
.help .question { font-weight: 700; }

.ribbon { flex: none; display: flex; height: 107px; border-bottom: 1px solid #6d7577; }
.group { display: flex; flex-direction: column; border-right: 1px solid #9ba0a2; }
.row { flex: 1; display: flex; justify-content: center; }
.group-label { height: 24px; }
.arrow { color: #606365; }
.help .arrow { color: #fff; }
.group-label .arrow, .tool span .arrow { margin-left: 1px; }
.tool { display: flex; flex-direction: column; align-items: center; padding-top: 5px; }
.tool span { margin-top: 8px; }
.tool > .arrow { margin-top: 5px; }
.tool.drag { width: 86px; }
.smalls { display: flex; flex-direction: column; align-items: center; width: 24px; padding-top: 1px; }
.smalls button { display: flex; align-items: center; height: 26px; }
.smalls .relation { font-size: 14px; font-weight: 700; }
.with-menu { align-items: flex-start; width: 36px; }
.with-menu button { gap: 6px; }
.texts { align-items: flex-start; width: 62px; }
.texts button { gap: 3px; }
.faded { opacity: .6; }
.row .rule { margin: 9px 0 9px 4px; }
.g-operations { width: 112px; }
.g-operations .tool { width: 72px; }
.g-data { width: 67px; }
.g-component { width: 178px; }
.g-component .tool:first-child { width: 60px; }
.g-datum { width: 128px; }
.g-datum .row { padding-right: 4px; }
.g-datum .tool { width: 40px; }
.g-datum .with-menu { width: 40px; padding-left: 5px; }
.g-cut { width: 96px; }
.g-modifiers { width: 72px; }
.g-display { width: 319px; }
.g-display .tool { width: 50px; }
.g-display .tool:nth-child(3) { width: 74px; }
.g-display .tool:nth-child(5) { width: 46px; }
.g-display .tool:last-child { width: 68px; }
.g-intent { width: 206px; }
.g-intent .tool { width: 66px; }
.g-intent .tool:nth-child(3) { width: 40px; }
.g-investigate { width: 123px; }
.g-investigate .tool { width: 59px; }

.workspace { flex: 1; min-height: 0; display: flex; }
.navigator { flex: none; display: flex; flex-direction: column; width: 272px; border-right: 3px solid #8c9294; }
.nav-tabs { display: flex; height: 30px; background: #979b9d; color: #f4f5f5; }
.nav-tabs button { flex: 1; display: flex; align-items: center; gap: 6px; padding-left: 8px; }
.nav-tabs .current { flex: 0 0 118px; gap: 2px; padding-left: 8px; background: #ecf0f1; color: #484b4d; }
.nav-tabs .fade { mask-image: linear-gradient(90deg, #000 60%, #0004); }
.navigator h2 { margin: 4px 0 0 12px; font-size: 12px; line-height: 16px; }
.folders { margin: 2px 0 0 12px; padding: 0; list-style: none; }
.folders a { display: flex; align-items: center; gap: 4px; height: 24px; color: inherit; text-decoration: none; }
.folders .network { margin-top: 24px; }
.folder-tree { display: flex; align-items: center; gap: 6px; margin-top: auto; padding: 0 0 11px 16px; font-weight: 700; }

.viewport { position: relative; flex: 1; min-width: 0; background: #1e1e23; }
.scene { width: 100%; height: 100%; }
.watermark {
  fill: #d2d2e2;
  font: 49px "Liberation Mono", monospace;
  filter: drop-shadow(1px 1px 0 #5a5a64);
}
.watermark .han { font: 300 55px "Noto Sans CJK SC", sans-serif; }
.view-tools {
  position: absolute;
  top: 8px;
  left: 50%;
  transform: translateX(-50%);
  display: flex;
  align-items: center;
  justify-content: space-between;
  width: 321px;
  height: 31px;
  padding: 0 3px 0 2px;
  background: #ecf0f1;
  border: 1px solid #b9bebf;
}
.view-tools button { display: grid; place-items: center; width: 24px; height: 24px; }
.view-tools .pressed, .left .pressed { background: #bfc2c3; border: 1px solid #777b7d; }

.statusbar { flex: none; display: flex; justify-content: space-between; height: 38px; border-top: 1px solid #85878b; }
.left, .right { display: flex; align-items: center; }
.left { gap: 9px; padding: 6px 0 0 6px; }
.left .pressed { display: grid; place-items: center; width: 22px; height: 22px; margin-right: -3px; }
.left .rule { height: 23px; margin-left: 3px; }
.right { flex: 0 0 404px; align-items: flex-start; padding-top: 4px; }
.right .rule { height: 29px; }
.right .second { margin: 0 1px 0 40px; }
.right .third { margin: 0 2px; }
.split { display: flex; height: 24px; margin-top: 1px; border: 1px solid #babebf; background: #f7f8f8; }
.split button { display: grid; place-items: center; width: 27px; }
.split .open { width: 14px; border-left: 1px solid #babebf; }
.box { display: grid; place-items: center; width: 40px; height: 28px; margin-top: 1px; border: 1px solid #aaaeb0; background: #f7f8f8; }
.filter { position: relative; width: 165px; margin: 3px 18px 0 auto; }
.filter select {
  display: block;
  appearance: none;
  width: 100%;
  height: 23px;
  padding: 0 7px;
  border: 1px solid #96999b;
  border-radius: 0;
  background: linear-gradient(90deg, #f9fafa calc(100% - 16px), #96999b calc(100% - 16px), #96999b calc(100% - 15px), #f9fafa calc(100% - 15px));
  color: inherit;
  font: inherit;
}
.filter .arrow { position: absolute; right: 4px; top: 10px; pointer-events: none; }
```
